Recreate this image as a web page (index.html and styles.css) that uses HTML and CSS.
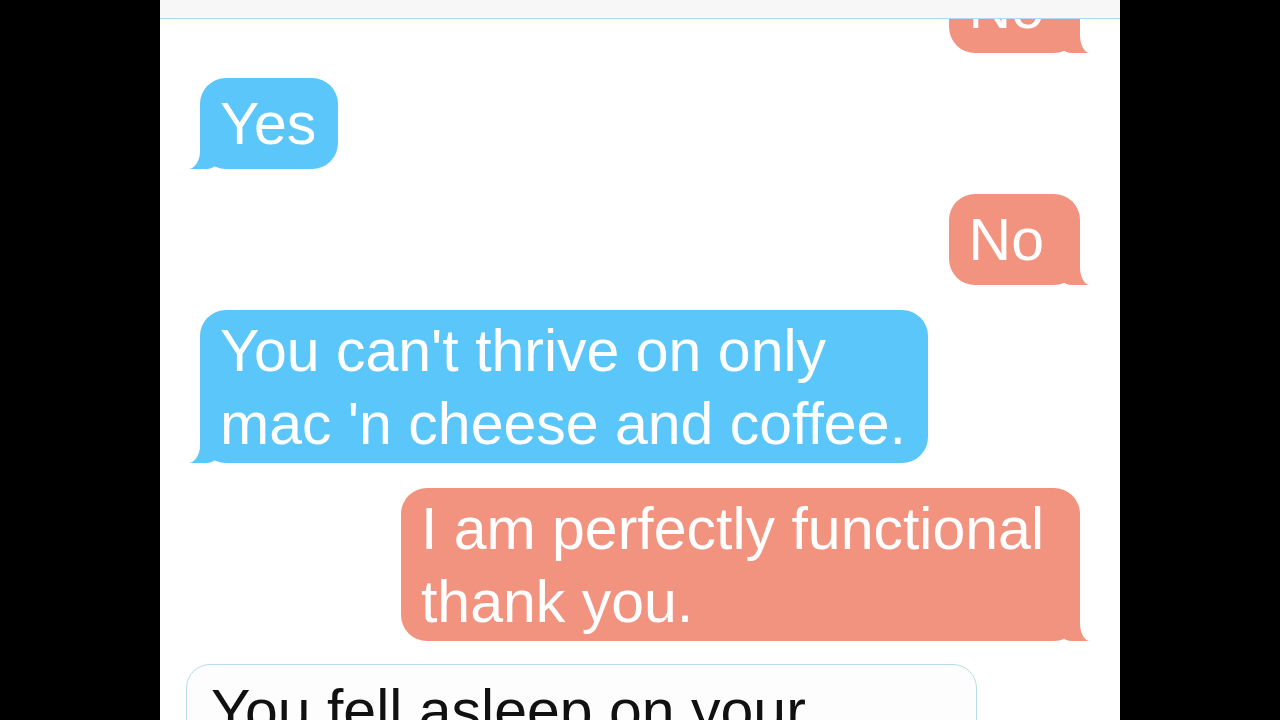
FILE: index.html
```html
<!DOCTYPE html>
<html lang="en">
<head>
<meta charset="utf-8">
<title>Messages</title>
<link rel="stylesheet" href="styles.css">
</head>
<body>
<div class="screen">
  <div class="topbar"></div>
  <div class="thread">
    <div class="bubble out single">No</div>
    <div class="bubble in single">Yes</div>
    <div class="bubble out single">No</div>
    <div class="bubble in multi">You can't thrive on only<br>mac 'n cheese and coffee.</div>
    <div class="bubble out multi">I am perfectly functional<br>thank you.</div>
  </div>
  <div class="composer">You fell asleep on your</div>
</div>
</body>
</html>
```

FILE: styles.css
```css
html, body {
  margin: 0;
  padding: 0;
  background: #000;
  height: 720px;
  overflow: hidden;
}

.screen {
  position: relative;
  width: 960px;
  height: 720px;
  margin: 0 auto;
  background: #fff;
  overflow: hidden;
  font-family: "Liberation Sans", Arial, sans-serif;
}

.topbar {
  position: absolute;
  top: 0;
  left: 0;
  right: 0;
  height: 18px;
  background: #f7f7f7;
  border-bottom: 1px solid #aedcee;
  z-index: 5;
}

.thread {
  display: flex;
  flex-direction: column;
  gap: 25px;
  padding: 0 40px;
  margin-top: -38px;
}

.bubble {
  position: relative;
  font-size: 59px;
  line-height: 73px;
  color: #fff;
  border-radius: 26px;
  white-space: nowrap;
}

.bubble.single {
  padding-top: 10px;
  padding-bottom: 8px;
}

.bubble.multi {
  padding-top: 5px;
  padding-bottom: 2px;
}

.bubble.in {
  align-self: flex-start;
  background: #5bc6f9;
  padding-left: 20px;
  padding-right: 22px;
}

.bubble.out {
  align-self: flex-end;
  background: #f29380;
  padding-left: 20px;
  padding-right: 36px;
}

.bubble::before,
.bubble::after {
  content: "";
  position: absolute;
  bottom: 0;
}

.bubble.in::before {
  left: -12px;
  width: 34px;
  height: 26px;
  background: #5bc6f9;
  border-bottom-right-radius: 16px;
  z-index: 0;
}

.bubble.in::after {
  left: -14px;
  width: 14px;
  height: 28px;
  background: #fff;
  border-bottom-right-radius: 12px 18px;
  z-index: 1;
}

.bubble.out::before {
  right: -10px;
  width: 34px;
  height: 26px;
  background: #f29380;
  border-bottom-left-radius: 16px;
  z-index: 0;
}

.bubble.out::after {
  right: -12px;
  width: 12px;
  height: 28px;
  background: #fff;
  border-bottom-left-radius: 10px 18px;
  z-index: 1;
}

.composer {
  margin-top: 23px;
  margin-left: 26px;
  width: 765px;
  height: 120px;
  padding: 10px 0 0 24px;
  border: 1px solid #b6dcec;
  border-radius: 24px;
  background: #fdfdfd;
  font-size: 59px;
  line-height: 73px;
  color: #111;
  white-space: nowrap;
}
```
